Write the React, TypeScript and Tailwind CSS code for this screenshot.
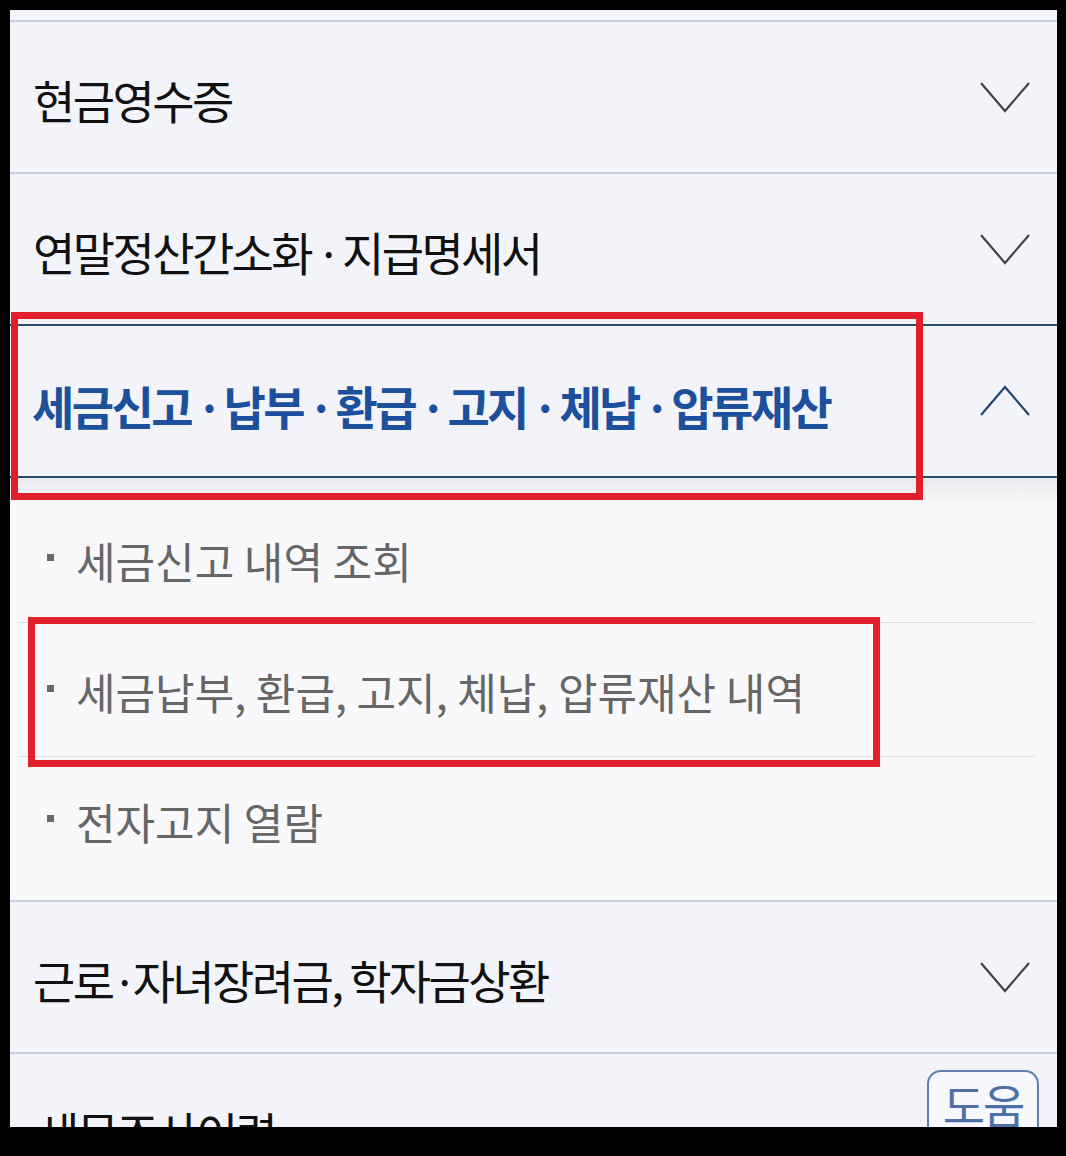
import React from "react";

const FONT = { fontFamily: '"Noto Sans CJK KR", "Noto Sans", sans-serif' };

function ChevronDown({ color = "#444" }: { color?: string }) {
  return (
    <svg width="52" height="32" viewBox="0 0 52 32" fill="none">
      <polyline points="2,2 26,30 50,2" stroke={color} strokeWidth="2.2" fill="none" />
    </svg>
  );
}

function ChevronUp({ color = "#24466f" }: { color?: string }) {
  return (
    <svg width="52" height="32" viewBox="0 0 52 32" fill="none">
      <polyline points="2,30 26,2 50,30" stroke={color} strokeWidth="2.2" fill="none" />
    </svg>
  );
}

function Sep({ text = " · " }: { text?: string }) {
  return <span className="text-[44px] tracking-[-4.5px]">{text}</span>;
}

function Row({ children }: { children: React.ReactNode }) {
  return (
    <div className="h-[152px] flex items-center justify-between pl-[23px] pr-[26px] border-b-2 border-[#c5cfdd]">
      <span className="text-[46px] leading-none tracking-[-2.6px] text-[#111] pt-[3px]">{children}</span>
      <ChevronDown />
    </div>
  );
}

function SubItem({ label, last, cls }: { label: string; last?: boolean; cls?: string }) {
  return (
    <div
      className={
        "ml-[8px] mr-[22px] h-[134px] flex items-center pl-[29px] " +
        (last ? "" : "border-b border-[#dedee2] ") +
        (cls || "")
      }
    >
      <span className="w-[7px] h-[7px] bg-[#6a6a6a] mr-[22px] -mt-[6px]" />
      <span className="text-[43px] leading-none tracking-[0px] text-[#666666]">{label}</span>
    </div>
  );
}

export default function App() {
  return (
    <div className="w-[1066px] h-[1156px] bg-black pt-[10px] pl-[10px] pr-[9px] pb-[29px]" style={FONT}>
      <div className="relative w-full h-full overflow-hidden bg-[#f2f4f9]">
        <div className="h-[12px] border-b-2 border-[#c5cfdd]" />
        <Row>현금영수증</Row>
        <div className="h-[150px] flex items-center justify-between pl-[23px] pr-[26px]">
          <span className="text-[46px] leading-none tracking-[-2.6px] text-[#111] pt-[3px]">
            연말정산간소화<Sep />지급명세서
          </span>
          <ChevronDown />
        </div>
        <div className="h-[154px] flex items-center justify-between pl-[22px] pr-[26px] border-y-2 border-[#2c4a70]">
          <span className="text-[46px] leading-none tracking-[-2.6px] font-bold text-[#1c4f9c] pt-[7px]">
            세금신고<Sep />납부<Sep />환급<Sep />고지<Sep />체납<Sep />압류재산
          </span>
          <ChevronUp />
        </div>
        <div className="bg-[linear-gradient(to_bottom,#e8e9ed_0px,#f9f9fb_26px)] bg-[#f9f9fb] pt-[11px] pb-[9px] border-b-2 border-[#c5cfdd]">
          <SubItem label="세금신고 내역 조회" cls="pt-[10px]" />
          <SubItem label="세금납부, 환급, 고지, 체납, 압류재산 내역" cls="pt-[4px]" />
          <SubItem label="전자고지 열람" last cls="pb-[6px]" />
        </div>
        <Row>
          근로<Sep text="·" />자녀장려금, 학자금상환
        </Row>
        <div className="relative h-[150px] flex items-center pl-[27px]">
          <span className="text-[46px] leading-none tracking-[-2.6px] text-[#111] pt-[3px]">세무조사이력</span>
          <div className="absolute right-[18px] top-[16px] w-[112px] h-[80px] rounded-[14px] border-2 border-[#5f7fac] bg-[#f7f8fb] flex justify-center pt-[8px]">
            <span className="text-[46px] leading-none tracking-[-2px] text-[#4b6fa6]">도움</span>
          </div>
        </div>

        <div className="absolute left-[1px] top-[302px] w-[912px] h-[188px] border-[7px] border-[#e01f2a]" />
        <div className="absolute left-[18px] top-[607px] w-[852px] h-[150px] border-[7px] border-[#e01f2a]" />
      </div>
    </div>
  );
}
